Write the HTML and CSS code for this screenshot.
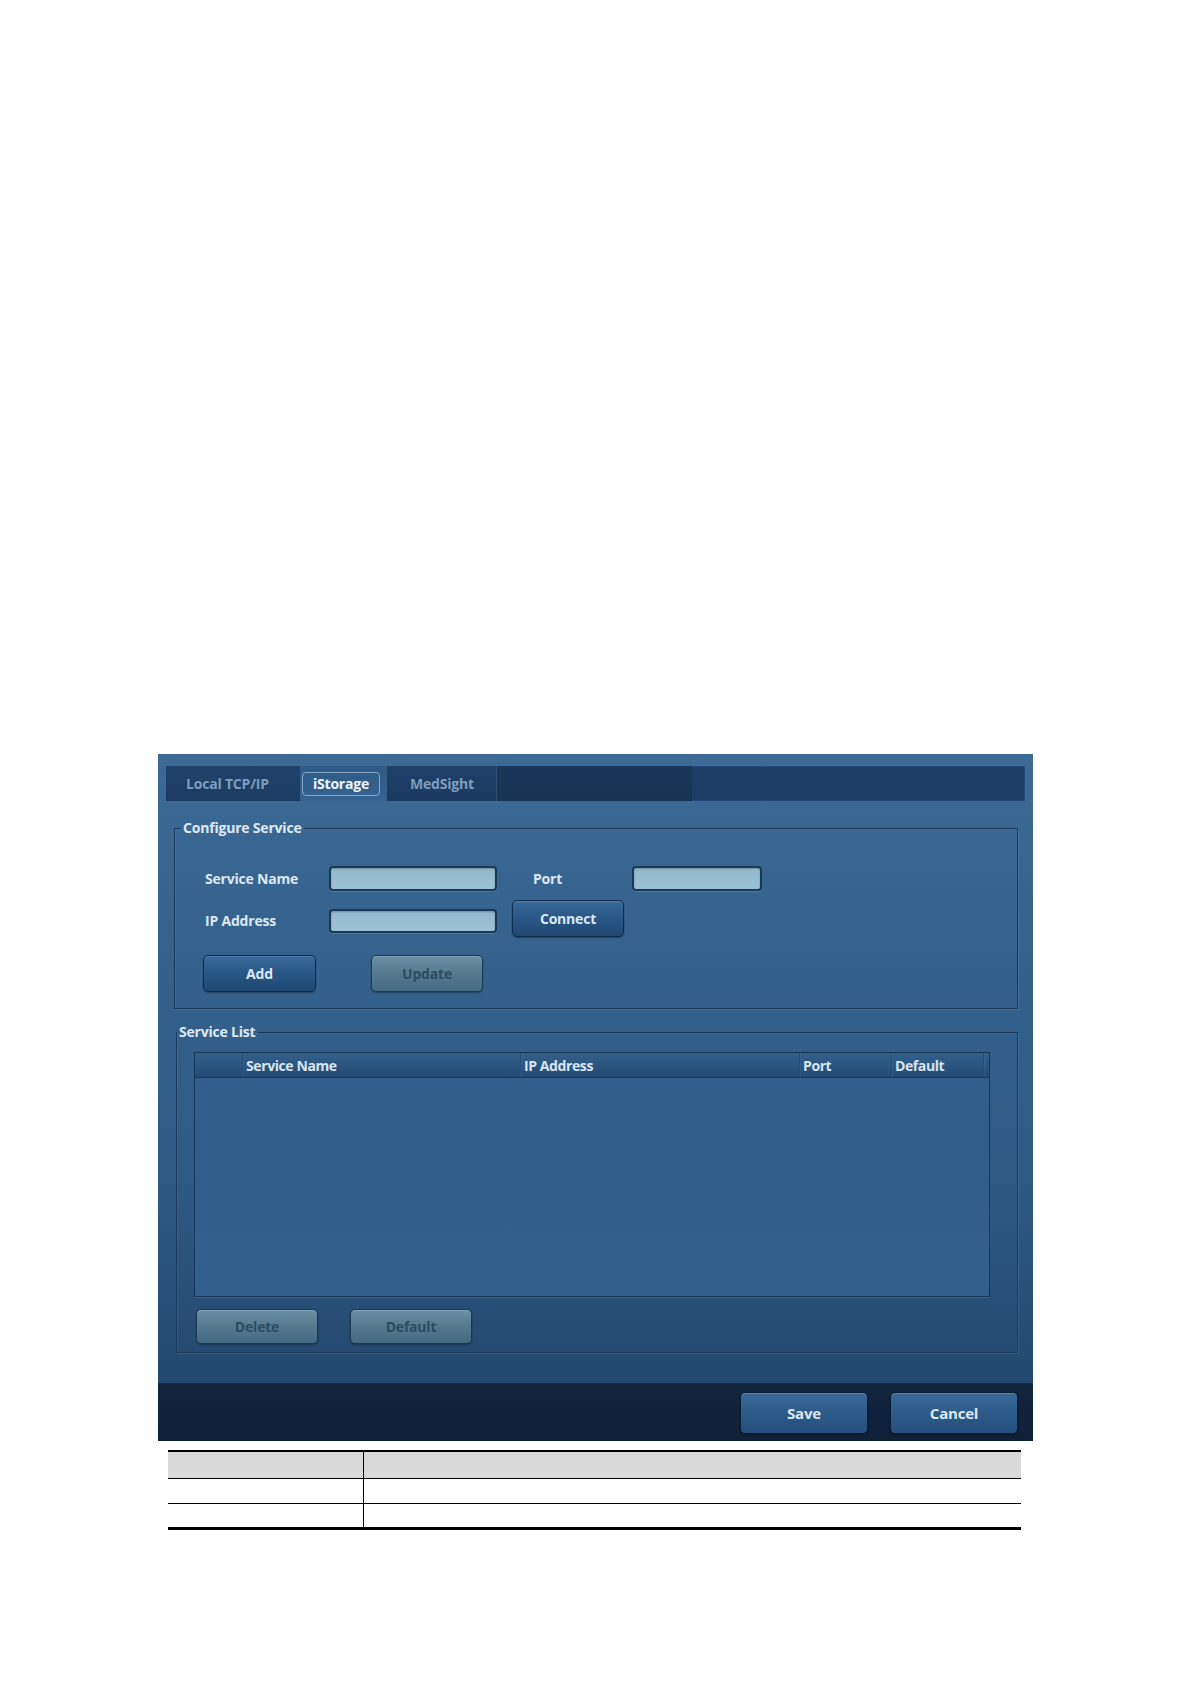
FILE: index.html
```html
<!DOCTYPE html>
<html lang="en">
<head>
<meta charset="utf-8">
<title>iStorage</title>
<link rel="stylesheet" href="styles.css">
</head>
<body>
<div class="page">
  <div class="panel">
    <div class="tabbar">
      <div class="tab tab-local">Local TCP/IP</div>
      <div class="tab tab-active"><span class="tab-outline">iStorage</span></div>
      <div class="tab tab-med">MedSight</div>
      <div class="tab-fill"></div>
    </div>

    <fieldset class="group config">
      <legend>Configure Service</legend>
      <div class="config-body">
        <div class="row row1">
          <span class="lbl">Service Name</span>
          <input class="field field-name" type="text">
          <span class="lbl lbl-port">Port</span>
          <input class="field field-port" type="text">
        </div>
        <div class="row row2">
          <span class="lbl lbl-low">IP Address</span>
          <input class="field field-name field-low" type="text">
          <button class="btn btn-connect">Connect</button>
        </div>
        <div class="row row3">
          <button class="btn btn-add">Add</button>
          <button class="btn btn-update disabled">Update</button>
        </div>
      </div>
    </fieldset>

    <fieldset class="group services">
      <legend>Service List</legend>
      <div class="services-body">
        <div class="list">
          <div class="thead">
            <div class="th c0"></div>
            <div class="th c1">Service Name</div>
            <div class="th c2">IP Address</div>
            <div class="th c3">Port</div>
            <div class="th c4">Default</div>
            <div class="th c5"></div>
          </div>
          <div class="tbody"></div>
        </div>
        <div class="row list-actions">
          <button class="btn btn-list disabled">Delete</button>
          <button class="btn btn-list btn-default disabled">Default</button>
        </div>
      </div>
    </fieldset>

    <div class="footer">
      <button class="btn btn-foot">Save</button>
      <button class="btn btn-foot">Cancel</button>
    </div>
  </div>

  <table class="doc">
    <tr class="head"><td></td><td></td></tr>
    <tr><td></td><td></td></tr>
    <tr class="last"><td></td><td></td></tr>
  </table>
</div>
</body>
</html>
```

FILE: styles.css
```css
* { box-sizing: border-box; }

body {
  margin: 0;
  background: #ffffff;
  font-family: "Open Sans", Lato, "DejaVu Sans", sans-serif;
}

.page {
  padding: 754px 0 0 158px;
}

/* ---------- dialog panel ---------- */
.panel {
  width: 875px;
  height: 687px;
  display: flex;
  flex-direction: column;
  background: linear-gradient(180deg, #3d6a95 0%, #35628d 30%, #2e5a84 60%, #264c73 85%, #22466b 100%);
}

/* ---------- tabs ---------- */
.tabbar {
  margin: 12px 8px 0;
  height: 35px;
  display: flex;
  background: #1d3d67;
  box-shadow: inset 0 0 0 1px #25497a;
}

.tab {
  height: 35px;
  display: flex;
  align-items: center;
  font-weight: 700;
  font-size: 14px;
  letter-spacing: -0.2px;
  color: #7d9dbd;
}

.tab-local {
  width: 134px;
  padding-left: 20px;
  background: linear-gradient(180deg, #20426b, #1b3b62);
}

.tab-active {
  width: 87px;
  padding-left: 2px;
  background: linear-gradient(180deg, #2f5b86, #35628e);
}

.tab-outline {
  width: 78px;
  height: 24px;
  display: flex;
  align-items: center;
  justify-content: center;
  border: 1px solid #86a8c6;
  border-radius: 4px;
  color: #eef4f9;
}

.tab-med {
  width: 110px;
  padding-left: 23px;
  background: linear-gradient(180deg, #1f4069, #1b3a61);
  border-right: 1px solid #2c5179;
}

.tab-fill {
  width: 195px;
  background: linear-gradient(180deg, #1a3759, #183455);
}

/* ---------- group boxes ---------- */
.group {
  margin: 0;
  padding: 0;
  min-width: 0;
  border: 1px solid #1d3a5a;
  box-shadow: 1px 1px 0 rgba(130, 170, 210, 0.18), inset 1px 1px 0 rgba(130, 170, 210, 0.12);
}

.group legend {
  padding: 0 2px;
  font-weight: 700;
  font-size: 14px;
  letter-spacing: -0.2px;
  line-height: 18px;
  color: #dde8f2;
}

.config {
  margin: 18px 15px 0 16px;
}

.config legend {
  margin-left: 6px;
}

.config-body {
  padding: 29px 0 16px 30px;
}

.row {
  display: flex;
}

.row1 {
  height: 25px;
  align-items: center;
}

.row2 {
  height: 37px;
  margin-top: 9px;
  align-items: flex-start;
}

.row3 {
  height: 37px;
  margin-top: 18px;
  margin-left: -2px;
}

.lbl {
  width: 124px;
  font-weight: 700;
  font-size: 14px;
  letter-spacing: -0.2px;
  color: #dde8f2;
  line-height: 24px;
}

.lbl-low {
  margin-top: 9px;
}

.lbl-port {
  width: 99px;
  margin-left: 36px;
}

.field {
  height: 25px;
  margin: 0;
  padding: 0 6px;
  border: 2px solid #1b3956;
  border-radius: 4px;
  background: linear-gradient(180deg, #93b9ce, #9cc2d6);
  box-shadow: inset 0 1px 2px rgba(0, 0, 0, 0.25), 0 1px 0 rgba(140, 180, 215, 0.25);
  font-family: "Open Sans", sans-serif;
  font-size: 14px;
  outline: none;
}

.field-name { width: 168px; }
.field-port { width: 130px; }
.field-low { height: 24px; margin-top: 9px; }

/* ---------- buttons ---------- */
.btn {
  height: 37px;
  margin: 0;
  padding: 0;
  border: 1px solid #112c4a;
  border-radius: 5px;
  background: linear-gradient(180deg, #3a6a99 0%, #2a5887 45%, #1f4771 100%);
  box-shadow: inset 0 1px 0 rgba(160, 200, 235, 0.25), 0 1px 2px rgba(0, 0, 0, 0.35);
  color: #dce8f2;
  font-family: "Open Sans", Lato, sans-serif;
  font-weight: 700;
  font-size: 14px;
  letter-spacing: -0.2px;
  cursor: default;
}

.btn.disabled {
  border-color: #1b3852;
  background: linear-gradient(180deg, #6b91a7 0%, #55798f 50%, #446a83 100%);
  box-shadow: inset 0 1px 0 rgba(200, 225, 240, 0.25), 0 1px 2px rgba(0, 0, 0, 0.3);
  color: #2d4c61;
}

.btn-connect { width: 112px; margin-left: 15px; }
.btn-add { width: 113px; }
.btn-update { width: 112px; margin-left: 55px; }

/* ---------- service list ---------- */
.services {
  margin: 14px 15px 0 18px;
}

.services-body {
  padding: 11px 0 8px 17px;
}

.list {
  width: 796px;
  height: 245px;
  display: flex;
  flex-direction: column;
  border: 1px solid #1a3655;
  box-shadow: 0 1px 0 rgba(130, 170, 210, 0.2);
}

.thead {
  height: 25px;
  display: flex;
  background: linear-gradient(180deg, #335f8a 0%, #2b5680 50%, #234a72 100%);
  border-bottom: 1px solid #1b3857;
}

.th {
  height: 100%;
  display: flex;
  align-items: center;
  padding-left: 3px;
  font-weight: 700;
  font-size: 14px;
  letter-spacing: -0.4px;
  color: #d8e5f0;
  border-left: 1px solid #264c74;
  box-shadow: inset 1px 0 0 rgba(120, 160, 200, 0.12);
}

.c0 { width: 47px; border-left: none; box-shadow: none; }
.c1 { width: 278px; }
.c2 { width: 279px; }
.c3 { width: 92px; }
.c4 { width: 92px; }
.c5 { width: 6px; padding: 0; }

.tbody {
  flex: 1;
  background: linear-gradient(180deg, #305d89, #325f8c);
}

.list-actions {
  height: 35px;
  margin-top: 12px;
  padding-left: 2px;
}

.btn-list { width: 122px; height: 35px; }
.btn-default { margin-left: 32px; }

/* ---------- footer ---------- */
.footer {
  margin-top: auto;
  height: 58px;
  display: flex;
  justify-content: flex-end;
  gap: 22px;
  padding: 8px 15px 0 0;
  background: linear-gradient(180deg, #12253e 0%, #0f2039 100%);
  border-top: 1px solid #18304d;
}

.btn-foot {
  width: 128px;
  height: 42px;
  border-color: #0b1d33;
  background: linear-gradient(180deg, #3b6a99 0%, #2d5a88 50%, #244f7c 100%);
  font-size: 15px;
}

/* ---------- table below ---------- */
.doc {
  width: 853px;
  margin: 9px 0 0 10px;
  border-collapse: collapse;
}

.doc td {
  height: 25px;
  padding: 0;
  border-top: 1px solid #000;
}

.doc td:first-child {
  width: 195px;
  border-right: 1px solid #000;
}

.doc tr.head td {
  height: 27px;
  background: #d9d9d9;
  border-top: 2px solid #000;
}

.doc tr.last td {
  border-bottom: 3px solid #000;
}
```
